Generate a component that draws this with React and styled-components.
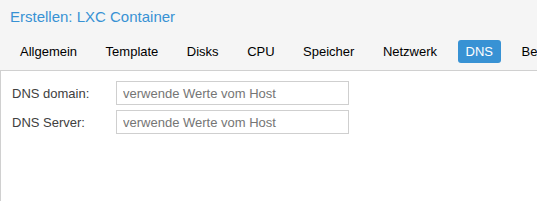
import React from 'react'
import styled, { createGlobalStyle } from 'styled-components'

const Global = createGlobalStyle`
  html, body {
    margin: 0;
    padding: 0;
    background: #f5f5f5;
  }
  body {
    font-family: "Liberation Sans", Arial, sans-serif;
  }
`

const Window = styled.div`
  width: 537px;
  height: 201px;
  display: flex;
  flex-direction: column;
  background: #f5f5f5;
  overflow: hidden;
`

const Title = styled.div`
  height: 32px;
  padding-left: 10px;
  display: flex;
  align-items: center;
  font-size: 15px;
  color: #3892d4;
  white-space: nowrap;
`

const TabBar = styled.div`
  display: flex;
  gap: 12.5px;
  padding: 8px 0 7px 12px;
  border-bottom: 1px solid #d0d0d0;
  white-space: nowrap;
`

const Tab = styled.div`
  height: 23px;
  padding: 0 8px;
  display: flex;
  align-items: center;
  font-size: 13px;
  border-radius: 3px;
  color: ${p => (p.$active ? '#fff' : '#000')};
  background: ${p => (p.$active ? '#3892d4' : 'transparent')};
  flex-shrink: 0;
`

const Body = styled.div`
  flex: 1;
  background: #fff;
  border-left: 1px solid #d0d0d0;
  padding: 10px 0 0 11px;
  display: flex;
  flex-direction: column;
  gap: 5px;
`

const Row = styled.div`
  display: flex;
  align-items: center;
`

const Label = styled.label`
  width: 104px;
  font-size: 13px;
  color: #404040;
`

const Input = styled.input`
  box-sizing: border-box;
  width: 233px;
  height: 24px;
  border: 1px solid #cfcfcf;
  padding: 0 6px;
  font-family: "Liberation Sans", Arial, sans-serif;
  font-size: 13px;
  outline: none;
  &::placeholder {
    color: #757575;
  }
`

const tabs = ['Allgemein', 'Template', 'Disks', 'CPU', 'Speicher', 'Netzwerk', 'DNS', 'Bestätigung']

export default function App() {
  return (
    <Window>
      <Global />
      <Title>Erstellen: LXC Container</Title>
      <TabBar>
        {tabs.map(t => (
          <Tab key={t} $active={t === 'DNS'}>{t}</Tab>
        ))}
      </TabBar>
      <Body>
        <Row>
          <Label>DNS domain:</Label>
          <Input placeholder="verwende Werte vom Host" />
        </Row>
        <Row>
          <Label>DNS Server:</Label>
          <Input placeholder="verwende Werte vom Host" />
        </Row>
      </Body>
    </Window>
  )
}
